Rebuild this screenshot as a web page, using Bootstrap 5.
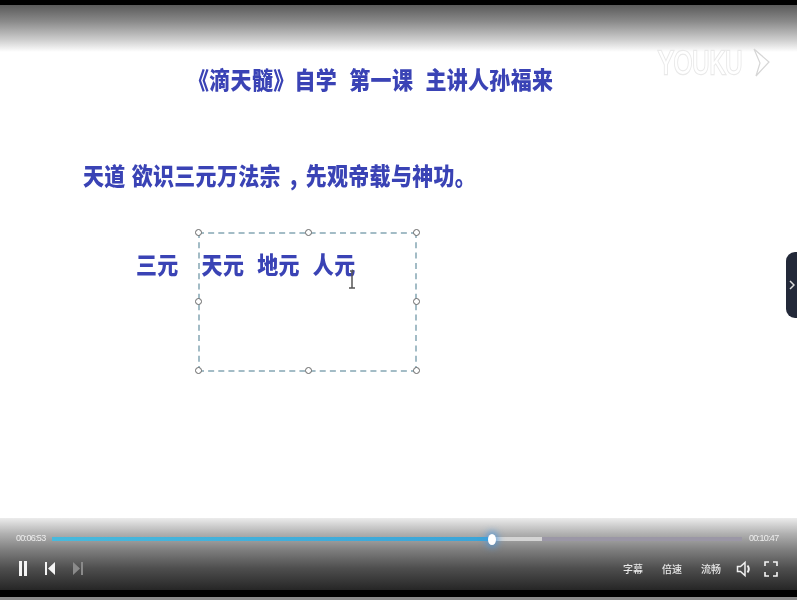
<!DOCTYPE html>
<html lang="zh">
<head>
<meta charset="utf-8">
<title>滴天髓</title>
<link href="https://cdn.jsdelivr.net/npm/bootstrap@5.3.0/dist/css/bootstrap.min.css" rel="stylesheet">
<style>
html,body{margin:0;height:600px;overflow:hidden;background:#fff}
body{font-family:"Liberation Sans","Noto Sans CJK SC",sans-serif}
.vp-frame{width:797px;height:600px;position:relative;background:#fff}
.vp-topbar{height:5px;background:#000}
.vp-topfade{height:47px;background:linear-gradient(#5a5a5a,#8a8a8a 35%,#cfcfcf 75%,#fff)}
.vp-slide{height:466px;font-family:"Noto Sans CJK SC",sans-serif;font-weight:900;color:#3a43b5;font-size:21px;line-height:30px;position:relative}
.vp-txt{filter:blur(.5px);transform:scaleY(1.14);white-space:pre;letter-spacing:.3px;word-spacing:1px}
.vp-title{padding-left:188px;padding-top:11px}
.vp-line2{padding-left:83px;padding-top:62px}
.vp-comma{margin:0 2px 0 3px}
.vp-row{padding-left:136px;padding-top:60px;gap:23px}
.vp-words{gap:13px}
.vp-sel{position:absolute;left:198px;top:180px;width:219px;height:140px;border:2px dashed #a3bcc6;filter:blur(.35px)}
.vp-h{position:absolute;width:7px;height:7px;border:1.5px solid #666;border-radius:50%;background:#fff}
.vp-cursor{position:absolute;left:347px;top:218px;filter:blur(.4px)}
.vp-controls{height:72px;background:linear-gradient(#ececec,#b0b0b0 22%,#7d7d7d 45%,#4e4e4e 70%,#262626);padding:0 19px 0 16px;color:#eee}
.vp-time{font-family:"Liberation Sans",sans-serif;font-size:9px;line-height:12px;letter-spacing:-.7px;width:30px;flex:none;white-space:nowrap;filter:blur(.35px)}
.vp-time-end{padding-left:1px}
.vp-trackrow{padding-top:14px;height:33px;gap:6px}
.vp-track{height:4px;flex:1 1 auto;background:#9b97a6;position:relative;margin-top:5px}
.vp-buf{position:absolute;left:0;top:0;height:4px;background:#d4d4d4;width:71%}
.vp-played{position:absolute;left:0;top:0;height:4px;background:linear-gradient(90deg,#48b9dc,#3ba4d8);width:63.8%}
.vp-thumb{position:absolute;left:63.8%;top:-3px;width:8px;height:11px;margin-left:-4px;border-radius:50%;background:#fff;box-shadow:0 0 6px 3px rgba(70,150,225,.65)}
.vp-btnrow{padding-top:9px;height:39px}
.vp-pause{margin-right:14px}
.vp-prev{margin-right:16px;margin-top:1px}
.vp-next{margin-top:1px}
.vp-label{font-family:"Noto Sans CJK SC",sans-serif;font-size:10px;line-height:18px;width:19px;white-space:nowrap;color:#e8e8e8;filter:blur(.4px);font-weight:500;margin-right:20px}
.vp-spk{margin-left:-4px;margin-right:12px}
.vp-bottom{height:7px;background:#000}
.vp-edge{height:3px;background:#8a8a8a}
.vp-tab{position:absolute;right:0;top:252px;width:11px;height:66px;background:#232939;border-radius:9px 0 0 9px;filter:blur(.4px)}
.vp-logo{position:absolute;left:658px;top:46px;font-family:"Liberation Sans",sans-serif;font-size:33px;line-height:34px;color:#fff;transform:scaleX(.72);transform-origin:left top;-webkit-text-stroke:2.5px #e9e9e9;paint-order:stroke fill;filter:blur(.6px)}
.vp-arrow{position:absolute;left:749px;top:47px;filter:blur(.6px)}
</style>
</head>
<body>
<div class="vp-frame d-flex flex-column">
  <div class="vp-topbar"></div>
  <div class="vp-topfade"></div>
  <div class="vp-slide">
    <div class="vp-title vp-txt">《滴天髓》自学  第一课  主讲人孙福来</div>
    <div class="vp-line2 vp-txt">天道 欲识三元万法宗 <span class="vp-comma">,</span> 先观帝载与神功。</div>
    <div class="vp-row vp-txt d-flex"><span>三元</span><span class="vp-words d-flex"><span>天元</span><span>地元</span><span>人元</span></span></div>
    <div class="vp-sel">
      <i class="vp-h" style="left:-5px;top:-5px"></i><i class="vp-h" style="left:105px;top:-5px"></i><i class="vp-h" style="left:213px;top:-5px"></i>
      <i class="vp-h" style="left:-5px;top:64px"></i><i class="vp-h" style="left:213px;top:64px"></i>
      <i class="vp-h" style="left:-5px;top:133px"></i><i class="vp-h" style="left:105px;top:133px"></i><i class="vp-h" style="left:213px;top:133px"></i>
    </div>
    <svg class="vp-cursor" width="10" height="20" viewBox="0 0 10 20"><path d="M3 1h4M5 1v17M2 18h6" stroke="#555" stroke-width="1.500" fill="none"/></svg>
  </div>
  <div class="vp-controls">
    <div class="vp-trackrow d-flex align-items-start">
      <span class="vp-time">00:06:53</span>
      <div class="vp-track"><div class="vp-buf"></div><div class="vp-played"></div><div class="vp-thumb"></div></div>
      <span class="vp-time vp-time-end">00:10:47</span>
    </div>
    <div class="vp-btnrow d-flex align-items-start">
      <svg class="vp-pause" width="14" height="18" viewBox="0 0 14 18"><rect x="3" y="1" width="3" height="15" fill="#f4f4f4"/><rect x="8" y="1" width="3" height="15" fill="#f4f4f4"/></svg>
      <svg class="vp-prev" width="12" height="16" viewBox="0 0 12 16"><path d="M1 1h2v13H1zM11 1v13L4 7.500z" fill="#f4f4f4"/></svg>
      <svg class="vp-next" width="12" height="16" viewBox="0 0 12 16"><path d="M9 1h2v13H9zM1 1v13l7-6.500z" fill="#8a8a8a"/></svg>
      <div class="flex-grow-1"></div>
      <span class="vp-label">字幕</span>
      <span class="vp-label">倍速</span>
      <span class="vp-label">流畅</span>
      <svg class="vp-spk" width="16" height="18" viewBox="0 0 16 18"><path d="M1.500 6.500h3L9 2.500v13l-4.500-4h-3z" fill="none" stroke="#f0f0f0" stroke-width="1.500"/><path d="M11.500 5.500c1.500 2 1.500 5 0 7" fill="none" stroke="#f0f0f0" stroke-width="2"/></svg>
      <svg width="14" height="18" viewBox="0 0 14 18"><path d="M1 6V2h4M9 2h4v4M13 12v4H9M5 16H1v-4" fill="none" stroke="#f4f4f4" stroke-width="1.600"/></svg>
    </div>
  </div>
  <div class="vp-bottom"></div>
  <div class="vp-edge"></div>
  <div class="vp-logo">YOUKU</div>
  <svg class="vp-arrow" width="24" height="32" viewBox="0 0 24 32"><path d="M5 2l15 13L7 29l4-13z" fill="#fff" stroke="#d6d6d6" stroke-width="1.200"/></svg>
  <div class="vp-tab d-flex align-items-center justify-content-center">
    <svg width="6" height="10" viewBox="0 0 6 10"><path d="M1 1l4 4-4 4" fill="none" stroke="#ddd" stroke-width="1.500"/></svg>
  </div>
</div>
</body>
</html>
